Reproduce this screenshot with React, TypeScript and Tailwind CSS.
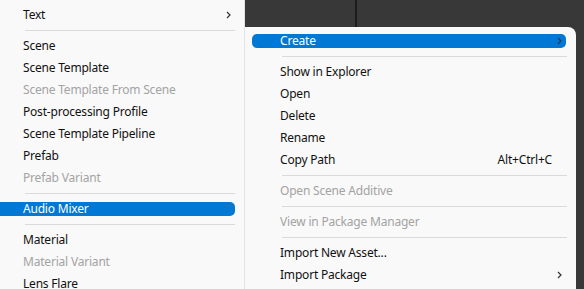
import React from "react";

type Item =
  | { kind: "sep" }
  | { kind: "item"; label: string; disabled?: boolean; active?: boolean; sub?: boolean; shortcut?: string };

const leftItems: Item[] = [
  { kind: "item", label: "Text", sub: true },
  { kind: "sep" },
  { kind: "item", label: "Scene" },
  { kind: "item", label: "Scene Template" },
  { kind: "item", label: "Scene Template From Scene", disabled: true },
  { kind: "item", label: "Post-processing Profile" },
  { kind: "item", label: "Scene Template Pipeline" },
  { kind: "item", label: "Prefab" },
  { kind: "item", label: "Prefab Variant", disabled: true },
  { kind: "sep" },
  { kind: "item", label: "Audio Mixer", active: true },
  { kind: "sep" },
  { kind: "item", label: "Material" },
  { kind: "item", label: "Material Variant", disabled: true },
  { kind: "item", label: "Lens Flare" },
];

const rightItems: Item[] = [
  { kind: "item", label: "Create", active: true, sub: true },
  { kind: "sep" },
  { kind: "item", label: "Show in Explorer" },
  { kind: "item", label: "Open" },
  { kind: "item", label: "Delete" },
  { kind: "item", label: "Rename" },
  { kind: "item", label: "Copy Path", shortcut: "Alt+Ctrl+C" },
  { kind: "sep" },
  { kind: "item", label: "Open Scene Additive", disabled: true },
  { kind: "sep" },
  { kind: "item", label: "View in Package Manager", disabled: true },
  { kind: "sep" },
  { kind: "item", label: "Import New Asset..." },
  { kind: "item", label: "Import Package", sub: true },
];

function Chevron({ light }: { light?: boolean }) {
  return (
    <svg width="5" height="8" viewBox="0 0 5 8" className="shrink-0">
      <path d="M1 1 L4 4 L1 7" fill="none" stroke={light ? "#1f3a5c" : "#333"} strokeWidth="1.2" />
    </svg>
  );
}

function MenuList({ items, left }: { items: Item[]; left?: boolean }) {
  return (
    <div className="flex flex-col">
      {items.map((it, i) =>
        it.kind === "sep" ? (
          <div key={i} className={`py-[4px] pr-[9px] ${left ? "pl-[25px]" : "pl-[37px]"}`}>
            <div className="h-px bg-[#dadada]" />
          </div>
        ) : (
          <div key={i} className="flex h-[22px] items-center">
            <div
              className={`flex h-[14px] w-full items-center pr-[14px] ${
                left ? "mr-[9px] pl-[23px]" : "ml-[7px] mr-[10px] pl-[28px]"
              } ${it.active ? (left ? "rounded-r-[5px] bg-[#0078d4] text-white" : "rounded-[5px] bg-[#0078d4] text-white") : it.disabled ? "text-[#a3a3a3]" : "text-[#111]"}`}
            >
              <span className="flex-1 whitespace-nowrap">{it.label}</span>
              {it.shortcut && <span className="whitespace-nowrap">{it.shortcut}</span>}
              {it.sub && (
                <span className="-mr-[10px]">
                  <Chevron light={it.active} />
                </span>
              )}
            </div>
          </div>
        )
      )}
    </div>
  );
}

export default function App() {
  return (
    <div
      className="flex h-[289px] w-[584px] overflow-hidden bg-[#383838] text-[12px] tracking-[-0.2px]"
      style={{ fontFamily: '"Noto Sans", "Segoe UI", sans-serif' }}
    >
      <div className="w-[245px] shrink-0 border-r border-[#e3e3e3] bg-[#f9f9f9] pt-[4px]">
        <MenuList items={leftItems} left />
      </div>
      <div className="flex flex-1 flex-col">
        <div className="flex h-[27px] shrink-0">
          <div className="w-[110px]" />
          <div className="w-[2px] bg-[#1c1c1c]" />
        </div>
        <div className="flex flex-1">
          <div className="w-[331px] rounded-tr-[8px] bg-[#f9f9f9] pt-[3px]">
            <MenuList items={rightItems} />
          </div>
        </div>
      </div>
    </div>
  );
}
